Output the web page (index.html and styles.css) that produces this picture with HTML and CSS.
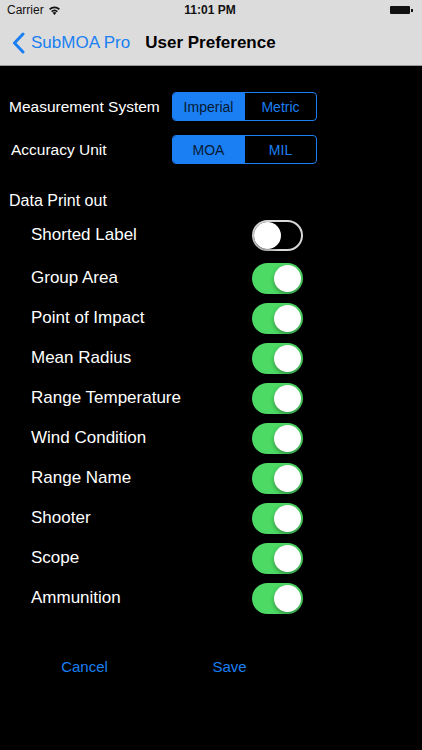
FILE: index.html
```html
<!DOCTYPE html>
<html lang="en">
<head>
    <meta charset="UTF-8">
    <title>User Preference - SubMOA Pro</title>
    <meta name="viewport" content="width=device-width, initial-scale=1">
    <link rel="stylesheet" href="styles.css">
</head>
<body>
    <header>
        <div class="status-bar">
            <span class="carrier">Carrier
                <svg class="wifi" width="13" height="10" viewBox="0 0 13 10">
                    <path d="M6.5 10 L4.6 7.8 A2.8 2.8 0 0 1 8.4 7.8 Z" fill="#111"/>
                    <path d="M3.6 6.6 A4.4 4.4 0 0 1 9.4 6.6" stroke="#111" stroke-width="1.6" fill="none"/>
                    <path d="M1.6 4.3 A7.2 7.2 0 0 1 11.4 4.3" stroke="#111" stroke-width="1.6" fill="none"/>
                </svg>
            </span>
            <span class="clock">11:01 PM</span>
            <span class="battery"><span class="battery-body"></span><span class="battery-nub"></span></span>
        </div>
        <div class="nav-bar">
            <a href="#" class="back">
                <svg width="13" height="22" viewBox="0 0 13 22">
                    <path d="M11 2 L2.5 11 L11 20" stroke="#1a7ff2" stroke-width="3" fill="none" stroke-linecap="round" stroke-linejoin="round"/>
                </svg>
                SubMOA Pro
            </a>
            <h1>User Preference</h1>
        </div>
    </header>

    <main id="prefs">
        <div class="seg-row">
            <label>Measurement System</label>
            <div class="segmented">
                <button class="active">Imperial</button>
                <button>Metric</button>
            </div>
        </div>
        <div class="seg-row second">
            <label class="indent">Accuracy Unit</label>
            <div class="segmented">
                <button class="active">MOA</button>
                <button>MIL</button>
            </div>
        </div>

        <h3 class="section-title">Data Print out</h3>
        <div id="print-list"></div>

        <div class="actions">
            <button>Cancel</button>
            <button>Save</button>
        </div>
    </main>

    <script>
    // print out options, first one is off
    const printOptions = [
        { name: 'Shorted Label', on: false },
        { name: 'Group Area', on: true },
        { name: 'Point of Impact', on: true },
        { name: 'Mean Radius', on: true },
        { name: 'Range Temperature', on: true },
        { name: 'Wind Condition', on: true },
        { name: 'Range Name', on: true },
        { name: 'Shooter', on: true },
        { name: 'Scope', on: true },
        { name: 'Ammunition', on: true }
    ];

    function renderOptions() {
        let html = '';
        printOptions.forEach((opt, i) => {
            html += `<div class="print-row">
                <span class="print-label">${opt.name}</span>
                <span class="switch ${opt.on ? 'on' : ''}" onclick="toggleOption(${i})"><span class="knob"></span></span>
            </div>`;
        });
        document.getElementById('print-list').innerHTML = html;
    }

    function toggleOption(i) {
        printOptions[i].on = !printOptions[i].on;
        renderOptions();
    }

    document.querySelectorAll('.segmented').forEach(seg => {
        seg.querySelectorAll('button').forEach(btn => {
            btn.addEventListener('click', () => {
                seg.querySelectorAll('button').forEach(b => b.classList.remove('active'));
                btn.classList.add('active');
            });
        });
    });

    renderOptions();
    </script>
</body>
</html>
```

FILE: styles.css
```css
body {
    margin: 0;
    background: #000;
    font-family: 'Liberation Sans', Arial, sans-serif;
    color: #fff;
    width: 422px;
    min-height: 750px;
}
header {
    background: #dcdcdc;
    border-bottom: 1px solid #9a9a9a;
}
.status-bar {
    height: 20px;
    display: flex;
    align-items: center;
    justify-content: space-between;
    padding: 0 9px 0 7px;
    font-size: 12px;
    color: #111;
}
.carrier {
    display: flex;
    align-items: center;
    gap: 4px;
    width: 120px;
}
.clock {
    font-weight: bold;
}
.battery {
    width: 120px;
    display: flex;
    justify-content: flex-end;
    align-items: center;
}
.battery-body {
    width: 20px;
    height: 8px;
    background: #111;
    border-radius: 1px;
}
.battery-nub {
    width: 2px;
    height: 3px;
    background: #111;
    margin-left: 1px;
}
.nav-bar {
    height: 45px;
    display: flex;
    align-items: center;
    padding-left: 12px;
}
.back {
    display: flex;
    align-items: center;
    gap: 6px;
    color: #1a7ff2;
    text-decoration: none;
    font-size: 17px;
    margin-right: 15px;
}
.nav-bar h1 {
    margin: 0;
    font-size: 17px;
    font-weight: bold;
    color: #000;
}
#prefs {
    padding-top: 26px;
}
.seg-row {
    display: flex;
    align-items: center;
    height: 29px;
}
.seg-row.second {
    margin-top: 14px;
}
.seg-row label {
    flex: 0 0 172px;
    padding-left: 9px;
    font-size: 15.5px;
    box-sizing: border-box;
}
.seg-row label.indent {
    padding-left: 11px;
}
.segmented {
    display: flex;
    width: 145px;
    height: 29px;
    border: 1px solid #1a7ff2;
    border-radius: 4px;
    overflow: hidden;
    box-sizing: border-box;
}
.segmented button {
    flex: 1;
    background: transparent;
    border: none;
    color: #1a7ff2;
    font-family: inherit;
    font-size: 14px;
    padding: 0;
    cursor: pointer;
}
.segmented button + button {
    border-left: 1px solid #1a7ff2;
}
.segmented button.active {
    background: #1a7ff2;
    color: #071a33;
}
.section-title {
    margin: 27px 0 4px 0;
    padding-left: 9px;
    font-size: 16px;
    font-weight: normal;
    line-height: 20px;
}
.print-row {
    width: 303px;
    height: 40px;
    padding-left: 31px;
    box-sizing: border-box;
    display: flex;
    align-items: center;
    justify-content: space-between;
}
.print-row:first-child {
    margin-bottom: 3px;
}
.print-label {
    font-size: 17px;
}
.switch {
    position: relative;
    width: 51px;
    height: 31px;
    border-radius: 16px;
    border: 2px solid #d9d9d9;
    box-sizing: border-box;
    background: #000;
    cursor: pointer;
}
.switch .knob {
    position: absolute;
    top: 0;
    left: 0;
    width: 27px;
    height: 27px;
    border-radius: 50%;
    background: #fff;
    box-shadow: 0 2px 4px rgba(0, 0, 0, .35);
}
.switch.on {
    background: #4cd964;
    border-color: #4cd964;
}
.switch.on .knob {
    left: 20px;
}
.actions {
    display: flex;
    margin-top: 39px;
    padding-left: 12px;
}
.actions button {
    width: 145px;
    background: none;
    border: none;
    color: #1a7ff2;
    font-family: inherit;
    font-size: 15px;
    line-height: 20px;
    padding: 0;
    cursor: pointer;
}
```
